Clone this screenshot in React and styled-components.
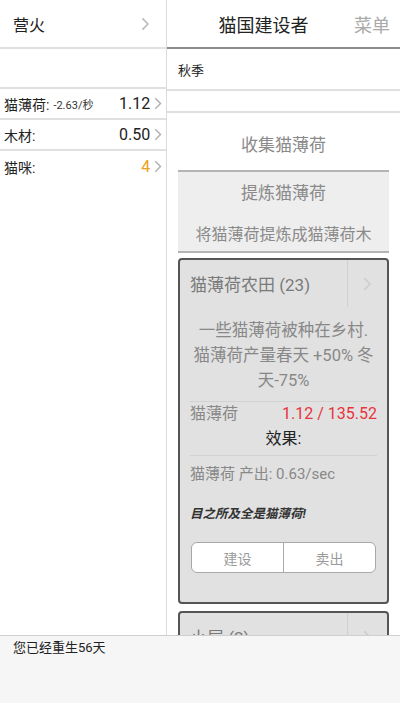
import React from 'react';
import styled, { createGlobalStyle } from 'styled-components';

const Global = createGlobalStyle`
    html, body {
        margin: 0;
        padding: 0;
        background: #fff;
    }
    body {
        font-family: Roboto, "Noto Sans CJK SC", sans-serif;
        color: #222;
    }
    * { box-sizing: border-box; }
`

const Page = styled.div`
    width: 400px;
    height: 703px;
    display: flex;
    flex-direction: column;
    overflow: hidden;
`

const Main = styled.div`
    flex: 1;
    display: flex;
    min-height: 0;
`

const Left = styled.div`
    width: 167px;
    border-right: 1px solid #dcdcdc;
`

const Right = styled.div`
    flex: 1;
    overflow: hidden;
`

const LeftHeader = styled.div`
    height: 49px;
    border-bottom: 2px solid #e0e0e0;
    display: flex;
    align-items: center;
    justify-content: space-between;
    padding: 0 17px 0 13px;
    font-size: 16px;
    color: #222;
`

const Blank = styled.div`
    height: ${p => p.h}px;
    border-bottom: 2px solid #e0e0e0;
`

const ResRow = styled.div`
    height: 31px;
    display: flex;
    align-items: center;
    padding: 0 4px 0 4px;
    border-bottom: ${p => p.last ? 'none' : '2px solid #e0e0e0'};
    .name {
        font-size: 14px;
        color: #222;
    }
    .rate {
        font-size: 11px;
        color: #333;
        margin-left: 4px;
    }
    .val {
        margin-left: auto;
        font-size: 16px;
        color: ${p => p.accent ? '#f0a020' : '#222'};
        margin-right: 4px;
    }
`

const Chev = ({ size = 12, color = '#b0b0b0' }) => (
    <svg width={size * 0.6} height={size} viewBox="0 0 6 10">
        <polyline points="1,1 5,5 1,9" fill="none" stroke={color} strokeWidth="1.1" />
    </svg>
)

const RightHeader = styled.div`
    height: 49px;
    border-bottom: 2px solid #8c8c8c;
    display: flex;
    align-items: center;
    .title {
        flex: 1;
        text-align: center;
        font-size: 18px;
        color: #222;
        padding-left: 6px;
    }
    .menu {
        font-size: 18px;
        color: #aaa;
        padding-right: 10px;
    }
`

const SeasonRow = styled.div`
    height: 42px;
    border-bottom: 2px solid #e0e0e0;
    display: flex;
    align-items: center;
    padding-left: 11px;
    font-size: 13px;
    color: #222;
`

const Collect = styled.div`
    height: 57px;
    padding-top: 20px;
    text-align: center;
    font-size: 17px;
    line-height: 24px;
    color: #8a8a8a;
`

const Refine = styled.div`
    margin: 0 11px;
    background: #eeeeee;
    border-top: 2px solid #b4b4b4;
    border-bottom: 2px solid #b4b4b4;
    padding: 8px 0 3px;
    text-align: center;
    color: #8a8a8a;
    .t {
        font-size: 17px;
        line-height: 26px;
    }
    .s {
        font-size: 16px;
        line-height: 26px;
        margin-top: 16px;
    }
`

const Card = styled.div`
    margin: ${p => p.first ? '5px' : '7px'} 11px 0;
    background: #e1e1e1;
    border: 2px solid #555;
    border-radius: 4px;
    padding-bottom: ${p => p.first ? '29px' : '0'};
`

const CardHead = styled.div`
    height: 47px;
    display: flex;
    .name {
        flex: 1;
        display: flex;
        align-items: center;
        padding-left: 10px;
        font-size: 17px;
        color: #7a7a7a;
    }
    .more {
        width: 40px;
        border-left: 1px solid #d0d0d0;
        display: flex;
        align-items: center;
        justify-content: center;
    }
`

const Desc = styled.div`
    margin-top: 11px;
    padding: 0 8px;
    text-align: center;
    font-size: 16.5px;
    line-height: 25px;
    color: #888;
`

const Divider = styled.div`
    margin: ${p => p.m || '0'} 10px 0;
    border-top: 1px solid #d2d2d2;
`

const StatRow = styled.div`
    display: flex;
    justify-content: space-between;
    padding: 0 10px;
    margin-top: 1px;
    font-size: 16px;
    line-height: 22px;
    .k { color: #888; }
    .v { color: #e8343c; }
`

const Effect = styled.div`
    text-align: center;
    font-size: 16px;
    line-height: 22px;
    margin-top: 3px;
    margin-bottom: 5px;
    color: #222;
`

const Output = styled.div`
    padding: 0 10px;
    margin-top: 7px;
    font-size: 15px;
    line-height: 22px;
    color: #888;
`

const Flavor = styled.div`
    padding: 0 10px;
    margin-top: 20px;
    font-size: 12.5px;
    line-height: 18px;
    font-weight: bold;
    font-style: italic;
    color: #333;
`

const BtnGroup = styled.div`
    margin: 19px 11px 0;
    height: 31px;
    display: flex;
    background: #fff;
    border: 1px solid #a8a8a8;
    border-radius: 6px;
    overflow: hidden;
`

const Btn = styled.div`
    flex: 1;
    display: flex;
    align-items: center;
    justify-content: center;
    font-size: 14px;
    color: #9a9a9a;
    & + & {
        border-left: 1px solid #a8a8a8;
    }
`

const Footer = styled.div`
    height: 68px;
    background: #f6f6f6;
    border-top: 1px solid #cfcfcf;
    padding: 3px 13px;
    font-size: 13px;
    line-height: 18px;
    color: #222;
`

const resources = [
    { name: '猫薄荷:', rate: '-2.63/秒', val: '1.12' },
    { name: '木材:', val: '0.50' },
    { name: '猫咪:', val: '4', accent: true },
]

const App = () => {
    return (
        <Page>
            <Global />
            <Main>
                <Left>
                    <LeftHeader>
                        <span>营火</span>
                        <Chev size={14} color="#b8b8b8" />
                    </LeftHeader>
                    <Blank h={40} />
                    {
                        resources.map((r, idx) => (
                            <ResRow key={idx} accent={r.accent} last={idx === resources.length - 1}>
                                <span className='name'>{r.name}</span>
                                {r.rate && <span className='rate'>{r.rate}</span>}
                                <span className='val'>{r.val}</span>
                                <Chev size={13} />
                            </ResRow>
                        ))
                    }
                </Left>
                <Right>
                    <RightHeader>
                        <div className='title'>猫国建设者</div>
                        <div className='menu'>菜单</div>
                    </RightHeader>
                    <SeasonRow>秋季</SeasonRow>
                    <Blank h={22} />
                    <Collect>收集猫薄荷</Collect>
                    <Refine>
                        <div className='t'>提炼猫薄荷</div>
                        <div className='s'>将猫薄荷提炼成猫薄荷木</div>
                    </Refine>
                    <Card first>
                        <CardHead>
                            <div className='name'>猫薄荷农田 (23)</div>
                            <div className='more'><Chev size={14} color="#cdcdcd" /></div>
                        </CardHead>
                        <Desc>一些猫薄荷被种在乡村.<br />猫薄荷产量春天 +50% 冬<br />天-75%</Desc>
                        <Divider m="8px" />
                        <StatRow>
                            <span className='k'>猫薄荷</span>
                            <span className='v'>1.12 / 135.52</span>
                        </StatRow>
                        <Effect>效果:</Effect>
                        <Divider />
                        <Output>猫薄荷 产出: 0.63/sec</Output>
                        <Flavor>目之所及全是猫薄荷!</Flavor>
                        <BtnGroup>
                            <Btn>建设</Btn>
                            <Btn>卖出</Btn>
                        </BtnGroup>
                    </Card>
                    <Card>
                        <CardHead>
                            <div className='name'>小屋 (2)</div>
                            <div className='more'><Chev size={14} color="#cdcdcd" /></div>
                        </CardHead>
                    </Card>
                </Right>
            </Main>
            <Footer>您已经重生56天</Footer>
        </Page>
    )
}

export default App
